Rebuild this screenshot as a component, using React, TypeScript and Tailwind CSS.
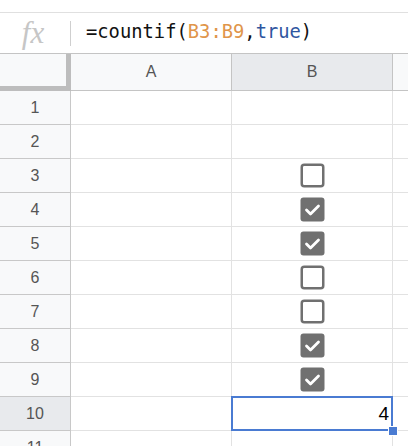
import React from "react";

const rows: (boolean | null)[] = [null, null, false, true, true, false, false, true, true];

const Checkbox = ({ checked }: { checked: boolean }) => (
  <svg width="25" height="25" viewBox="0 0 25 25">
    {checked ? (
      <>
        <rect x="0.5" y="0.5" width="24" height="24" rx="3" fill="#707070" />
        <polyline points="6.5,13 10.5,17 18.5,9" fill="none" stroke="#fff" strokeWidth="2.8" strokeLinecap="round" strokeLinejoin="round" />
      </>
    ) : (
      <rect x="1.75" y="1.75" width="21.5" height="21.5" rx="2.5" fill="#fff" stroke="#707070" strokeWidth="2.5" />
    )}
  </svg>
);

export default function App() {
  return (
    <div className="w-[408px] h-[446px] overflow-hidden bg-white font-['Liberation_Sans',Arial,sans-serif]">
      <div className="h-[12px]" />

      {/* formula bar */}
      <div className="h-[41px] border-t border-[#e0e0e0] flex items-center">
        <div className="w-[70px] flex justify-center pr-[4px]">
          <span className="font-['Liberation_Serif',serif] italic text-[31px] leading-none text-[#c6c6c6] -mt-[2px]">fx</span>
        </div>
        <div className="w-px h-[25px] bg-[#cfcfcf]" />
        <div className="pl-[15px] font-['DejaVu_Sans_Mono',monospace] text-[18.8px] text-[#111] leading-none -mt-[2px]">
          =countif(<span className="text-[#e0954a]">B3:B9</span>,<span className="text-[#2f56a0]">true</span>)
        </div>
      </div>

      {/* header row */}
      <div className="flex h-[38px] border-t border-[#c4c4c4]">
        <div className="w-[71px] shrink-0 bg-[#f8f9fa] border-r-[5px] border-b-[5px] border-[#bdbdbd]" />
        <div className="w-[161px] shrink-0 bg-[#f8f9fa] border-b border-r border-[#c4c4c4] flex items-center justify-center text-[16px] text-[#555]">A</div>
        <div className="w-[161px] shrink-0 bg-[#e8eaed] border-b border-r border-[#c4c4c4] flex items-center justify-center text-[16px] text-[#555]">B</div>
        <div className="flex-1 bg-[#f8f9fa] border-b border-[#c4c4c4]" />
      </div>

      {/* rows */}
      {[...rows, "sum", null].map((v, i) => {
        const selected = i === 9;
        return (
          <div key={i} className="flex h-[34px]">
            <div
              className={`w-[71px] shrink-0 border-r border-b border-[#c8c8c8] flex items-center justify-center text-[16px] text-[#555] ${
                selected ? "bg-[#e8eaed]" : "bg-[#f8f9fa]"
              }`}
            >
              {i + 1}
            </div>
            <div className="w-[161px] shrink-0 border-r border-b border-[#e2e2e2]" />
            <div className="relative w-[161px] shrink-0 border-r border-b border-[#e2e2e2] flex items-center justify-center">
              {typeof v === "boolean" && <Checkbox checked={v} />}
              {v === "sum" && (
                <>
                  <span className="ml-auto pr-[3px] pt-[2px] text-[19px] text-black">4</span>
                  <div className="absolute -left-px -top-px -right-px -bottom-px border-2 border-[#4a7bd2]" />
                  <div className="absolute z-10 right-[-6px] bottom-[-6px] w-[10px] h-[10px] bg-[#4a7bd2] border border-white" />
                </>
              )}
            </div>
            <div className="flex-1 border-b border-[#e2e2e2]" />
          </div>
        );
      })}
    </div>
  );
}
